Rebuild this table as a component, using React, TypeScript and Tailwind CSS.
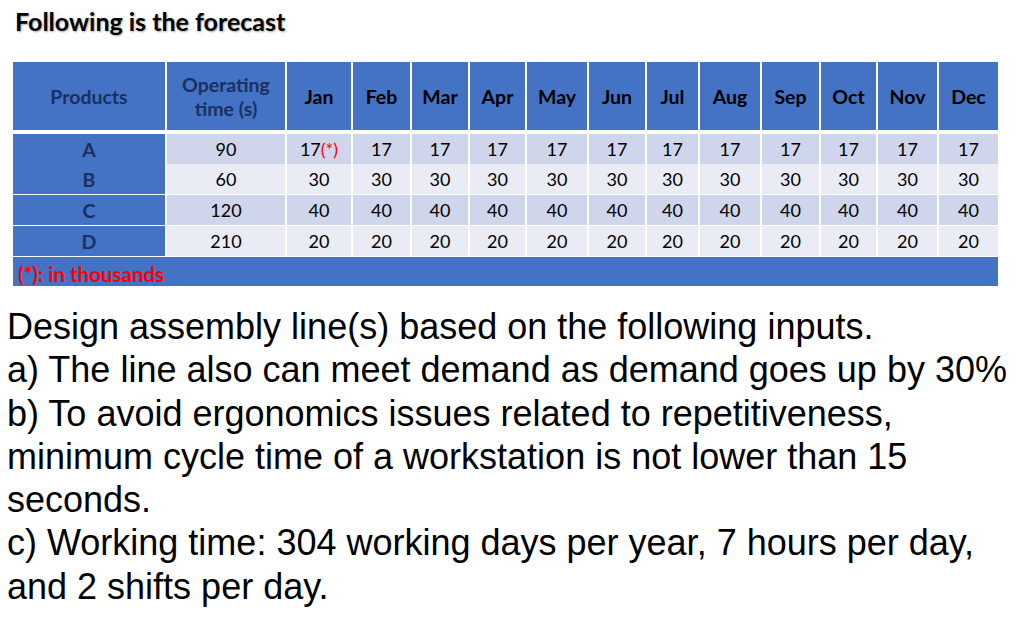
import React from "react";

const months = ["Jan","Feb","Mar","Apr","May","Jun","Jul","Aug","Sep","Oct","Nov","Dec"];
const rows = [
  { p: "A", t: "90", v: "17", bg: "bg-[#cfd5ea]" },
  { p: "B", t: "60", v: "30", bg: "bg-[#e9ebf5]" },
  { p: "C", t: "120", v: "40", bg: "bg-[#cfd5ea]" },
  { p: "D", t: "210", v: "20", bg: "bg-[#e9ebf5]" },
];

const cols = "grid grid-cols-[152px_118px_64px_57px_56px_55px_60px_56px_51px_60px_57px_55px_59px_59px] gap-x-[2px]";

export default function App() {
  return (
    <div className="w-[1024px] h-[630px] bg-white overflow-hidden relative">
      <div className="pt-[6px] pl-[15px] text-[25px] font-bold text-black leading-[30px] [font-family:Lato,'Open_Sans',sans-serif] [text-shadow:1px_1px_2px_rgba(0,0,0,0.35)]">
        Following is the forecast
      </div>
      <div className="mt-[26px] ml-[13px] w-[985px] flex flex-col gap-[1px] [font-family:Lato,'Open_Sans',sans-serif] text-[18px]">
        <div className={`${cols} h-[68px] mb-[3px] text-[19.5px]`}>
          <div className="bg-[#4472c4] flex items-center justify-center pt-[2px] font-bold text-[#1a3060]">Products</div>
          <div className="bg-[#4472c4] flex items-center justify-center pt-[2px] text-center font-bold text-[#1a3060] leading-[24px]">
            Operating<br />time (s)
          </div>
          {months.map((m) => (
            <div key={m} className="bg-[#4472c4] flex items-center justify-center pt-[2px] font-bold text-black">{m}</div>
          ))}
        </div>
        {rows.map((r, i) => (
          <div key={r.p} className={`${cols} ${i === 0 ? "h-[29px]" : "h-[30px]"}`}>
            <div className="bg-[#4472c4] flex items-center justify-center pt-[1px] font-bold text-[19.5px] text-[#1a3060]">{r.p}</div>
            <div className={`${r.bg} flex items-center justify-center text-black`}>{r.t}</div>
            {months.map((m, j) => (
              <div key={m} className={`${r.bg} flex items-center justify-center text-black`}>
                {r.v}
                {i === 0 && j === 0 ? <span className="text-[#ff0000]">(*)</span> : null}
              </div>
            ))}
          </div>
        ))}
        <div className="h-[29px] bg-[#4472c4] flex items-center pl-[5px] pt-[6px] font-bold text-[20.5px] text-[#ff0000]">
          (*): in thousands
        </div>
      </div>
      <div className="mt-[19px] ml-[7px] text-[36px] leading-[43.3px] text-black [font-family:'Liberation_Sans',Arial,sans-serif]">
        <div>Design assembly line(s) based on the following inputs.</div>
        <div>a) The line also can meet demand as demand goes up by 30%</div>
        <div>b) To avoid ergonomics issues related to repetitiveness,</div>
        <div>minimum cycle time of a workstation is not lower than 15</div>
        <div>seconds.</div>
        <div>c) Working time: 304 working days per year, 7 hours per day,</div>
        <div>and 2 shifts per day.</div>
      </div>
    </div>
  );
}
